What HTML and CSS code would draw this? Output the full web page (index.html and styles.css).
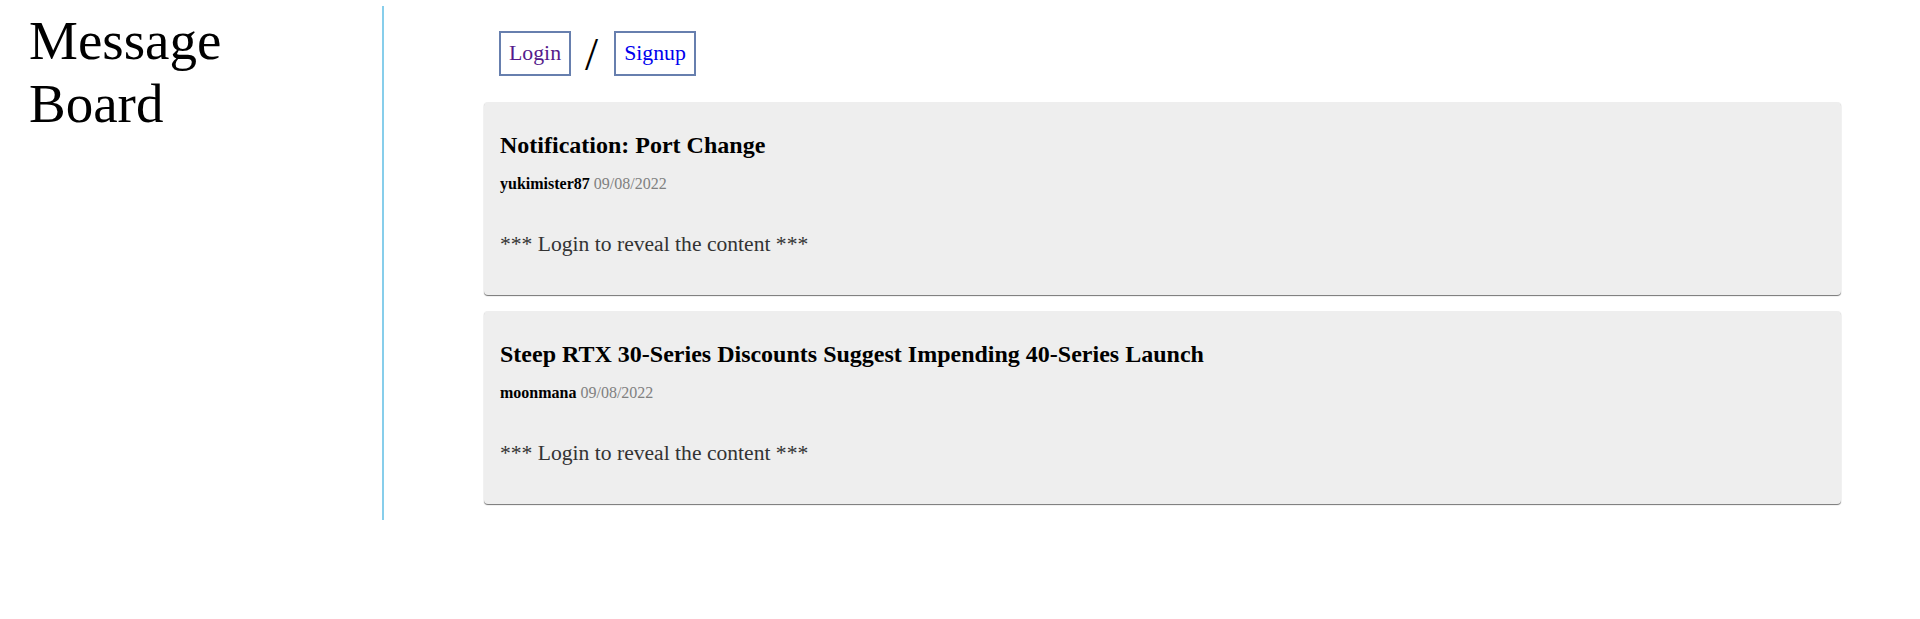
FILE: index.html
```html
<!DOCTYPE html>
<html lang="en">
<head>
<meta charset="utf-8">
<title>Message Board</title>
<link rel="stylesheet" href="styles.css">
</head>
<body>
<div class="layout">
  <aside class="sidebar">
    <h1 class="site-title">Message Board</h1>
  </aside>
  <main class="main">
    <nav class="auth-nav">
      <a class="auth-link visited" href="#login">Login</a>
      <span class="auth-sep">/</span>
      <a class="auth-link" href="#signup">Signup</a>
    </nav>
    <article class="post">
      <h2 class="post-title">Notification: Port Change</h2>
      <div class="post-meta"><b class="post-author">yukimister87</b> <span class="post-date">09/08/2022</span></div>
      <p class="post-body">*** Login to reveal the content ***</p>
    </article>
    <article class="post">
      <h2 class="post-title">Steep RTX 30-Series Discounts Suggest Impending 40-Series Launch</h2>
      <div class="post-meta"><b class="post-author">moonmana</b> <span class="post-date">09/08/2022</span></div>
      <p class="post-body">*** Login to reveal the content ***</p>
    </article>
  </main>
</div>
</body>
</html>
```
FILE: styles.css
```css
html, body {
  margin: 0;
  padding: 0;
  background: #fff;
}

body {
  font-family: "Liberation Serif", "Times New Roman", serif;
  color: #000;
}

.layout {
  display: flex;
  margin-top: 6px;
}

.sidebar {
  box-sizing: border-box;
  width: 384px;
  flex: 0 0 384px;
  padding: 0 60px 0 29px;
  border-right: 2px solid #87ceeb;
}

.site-title {
  margin: 3px 0 0;
  font-size: 55px;
  font-weight: normal;
  line-height: normal;
}

.main {
  flex: 1;
  padding: 0 79px 0 100px;
}

.auth-nav {
  display: flex;
  align-items: center;
  margin: 25px 0 26px 15px;
  font-size: 21.8px;
}

.auth-link {
  display: block;
  padding: 8px;
  border: 2px solid #677fae;
  line-height: normal;
  text-decoration: none;
  color: #0000ee;
}

.auth-link.visited {
  color: #551a8b;
}

.auth-sep {
  font-size: 47px;
  line-height: 44px;
  margin: 0 16px 0 14px;
}

.post {
  background: #eeeeee;
  border-radius: 4px;
  box-shadow: 0 1px 1px rgba(0, 0, 0, 0.55);
  padding: 10px 16px 18px;
  margin-bottom: 16px;
}

.post-title {
  margin: 20px 0 16px;
  font-size: 24px;
  font-weight: bold;
  line-height: normal;
}

.post-meta {
  font-size: 16px;
  line-height: normal;
}

.post-author {
  font-weight: bold;
}

.post-date {
  color: #808080;
}

.post-body {
  margin: 39px 0 20px;
  font-size: 21.6px;
  line-height: normal;
  color: #333;
}
```
